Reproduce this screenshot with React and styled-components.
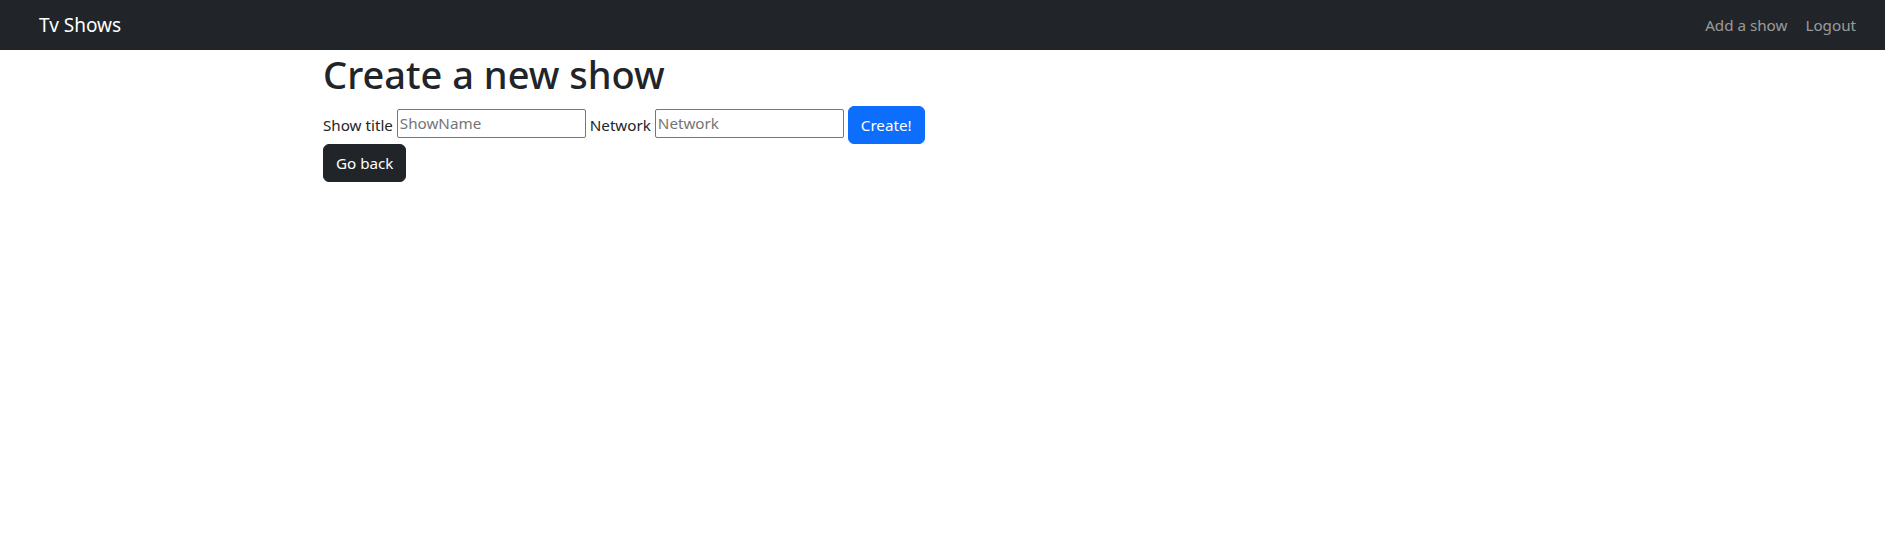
import React from "react";
import styled, { createGlobalStyle } from "styled-components";

const GlobalStyle = createGlobalStyle`
  * { box-sizing: border-box; }
  body {
    margin: 0;
    background: #fff;
    color: #212529;
    font-family: "Noto Sans", "Open Sans", sans-serif;
    font-size: 15.2px;
    line-height: 24px;
  }
`;

const NavBar = styled.nav`
  height: 50px;
  background: #212529;
  display: flex;
  align-items: center;
  justify-content: space-between;
  padding: 0 21px 0 39px;
`;
const Brand = styled.a`
  color: #fff;
  font-size: 19px;
  line-height: 30px;
  text-decoration: none;
`;
const NavLinks = styled.div`
  display: flex;
  gap: 2px;
`;
const NavLink = styled.a`
  color: rgba(255, 255, 255, 0.55);
  padding: 0 8px;
  text-decoration: none;
  cursor: pointer;
  &:hover {
    color: rgba(255, 255, 255, 0.75);
  }
`;

const Main = styled.main`
  max-width: 1239px;
  margin: 0 auto;
`;
const Title = styled.h1`
  margin: 0 0 8px;
  font-size: 38px;
  font-weight: 500;
  line-height: 48px;
`;
const Form = styled.form`
  display: block;
`;
const Input = styled.input`
  width: 189px;
  height: 29px;
  padding: 1px 2px;
  border: 1px solid #767676;
  border-radius: 2px;
  font: inherit;
  color: #212529;
  vertical-align: 2px;
  &::placeholder {
    color: #757575;
  }
`;
const Button = styled.button`
  display: inline-block;
  padding: 6px 12px;
  border: 1px solid ${(p) => p.$bg};
  border-radius: 6px;
  background: ${(p) => p.$bg};
  color: #fff;
  font: inherit;
  line-height: 24px;
  cursor: pointer;
`;

export default function App() {
  return (
    <>
      <GlobalStyle />
      <NavBar>
        <Brand>Tv Shows</Brand>
        <NavLinks>
          <NavLink>Add a show</NavLink>
          <NavLink>Logout</NavLink>
        </NavLinks>
      </NavBar>
      <Main>
        <Title>Create a new show</Title>
        <Form onSubmit={(e) => e.preventDefault()}>
          <label>Show title</label> <Input placeholder="ShowName" />{" "}
          <label>Network</label> <Input placeholder="Network" />{" "}
          <Button type="submit" $bg="#0d6efd">Create!</Button>
        </Form>
        <Button $bg="#212529">Go back</Button>
      </Main>
    </>
  );
}
